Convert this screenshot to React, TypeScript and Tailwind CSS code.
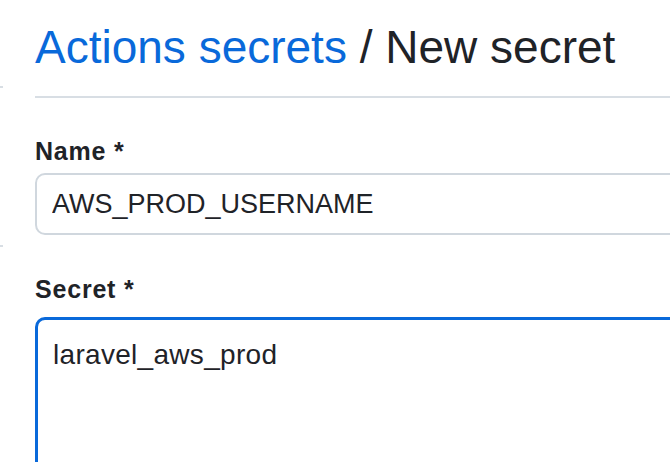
import React, { useState } from 'react'

const App = () => {
  const [name, setName] = useState('AWS_PROD_USERNAME')
  const [secret, setSecret] = useState('laravel_aws_prod')

  return (
    <div className="relative h-[462px] w-[670px] overflow-hidden bg-white font-['Liberation_Sans',Arial,sans-serif] text-[#1f2328]">
      {/* left edge ticks from the sidebar */}
      <div className="absolute left-0 top-[86px] h-[2px] w-[3px] bg-[#d8dee4]" />
      <div className="absolute left-0 top-[245px] h-[2px] w-[3px] bg-[#d8dee4]" />

      <div className="pl-[35px]">
        <div className="border-b-2 border-[#d8dee4] pb-[21px] pt-[19px]">
          <h2 className="whitespace-nowrap text-[46px] leading-[56px] font-normal">
            <a href="#" className="text-[#0969da]">
              Actions secrets
            </a>{' '}
            / New secret
          </h2>
        </div>

        <form className="w-[720px]">
          <label className="mt-[38px] block text-[25px] font-bold leading-[30px] tracking-[0.8px]">
            Name *
          </label>
          <input
            value={name}
            onChange={(e) => setName(e.target.value)}
            className="mt-[7px] block h-[62px] w-full rounded-[10px] border-2 border-[#d0d7de] bg-white pl-[15px] text-[27px] text-[#1f2328] outline-none"
          />

          <label className="mt-[39px] block text-[25px] font-bold leading-[30px] tracking-[0.8px]">
            Secret *
          </label>
          <textarea
            value={secret}
            onChange={(e) => setSecret(e.target.value)}
            className="mt-[13px] block h-[220px] w-full resize-none rounded-[10px] border-[3px] border-[#0969da] bg-white pl-[15px] pt-[15px] text-[28px] leading-[40px] tracking-[0.3px] text-[#1f2328] outline-none"
          />
        </form>
      </div>
    </div>
  )
}

export default App
